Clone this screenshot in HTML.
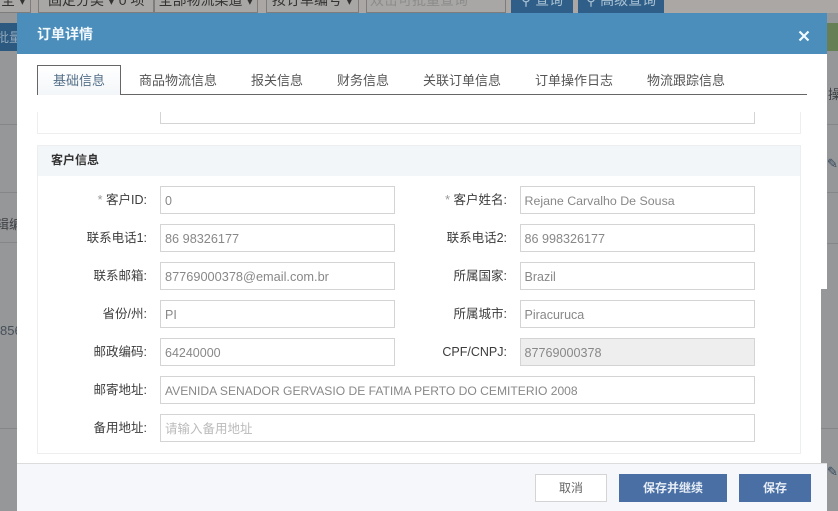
<!DOCTYPE html>
<html lang="zh"><head><meta charset="utf-8"><style>
html,body{margin:0;padding:0;background:#969798}
body{width:838px;height:511px;position:relative;overflow:hidden;font-family:"Liberation Sans","Noto Sans CJK SC",sans-serif;font-size:13px}
.a{position:absolute;box-sizing:border-box;white-space:nowrap}
.top{height:13px;top:0;border:1px solid #7e7d7c;border-top:0;background:#a9a7a5;color:#333;line-height:0;text-align:center;font-size:14px}
.btn{top:0;height:13px;background:#2f5f88;color:#a9c0d3;line-height:0;font-size:14px;text-align:center}
.ln{height:1px;background:#858687}
.bgt{color:#3d4145;font-size:13px}
.tab{top:72px;color:#555;font-size:13px;line-height:18px}
.lb{width:90px;text-align:right;color:#3c3c3c;font-size:12.5px;line-height:16px}
.in{height:28px;background:#fff;border:1px solid #d4d4d4;color:#888;font-size:12.5px;line-height:28px;padding-left:4px}
.r{padding-left:3.5px}
.blue{top:474px;height:28px;background:#4a6fa5;color:#e6edf5;text-align:center;line-height:29px;font-size:12px;font-weight:bold}
</style></head><body>
<div class="a" style="left:0;top:0;width:838px;height:511px;background:#969798"></div>
<div class="a" style="left:0;top:0;width:838px;height:13px;background:#aaa7a4"></div>
<div class="a top" style="left:-4px;width:35px">全 ▾</div>
<div class="a top" style="left:38px;width:116px;text-align:left;padding-left:9px">固定分类 ▾ 0 项</div>
<div class="a top" style="left:154px;width:104px">全部物流渠道 ▾</div>
<div class="a top" style="left:266px;width:93px">按订单编号 ▾</div>
<div class="a top" style="left:366px;width:140px;color:#8c8c8c;text-align:left;padding-left:3px">双击可批量查询</div>
<div class="a btn" style="left:511px;width:62px">⚲ 查询</div>
<div class="a btn" style="left:578px;width:86px">⚲ 高级查询</div>
<div class="a" style="left:0;top:23px;width:17px;height:28px;background:#2c597f;color:#8fa7bb;font-size:13px;line-height:30px;overflow:hidden;text-indent:-4px">批量</div>
<div class="a" style="left:827px;top:23px;width:11px;height:28px;background:#667f55"></div>
<div class="a ln" style="left:0;top:124px;width:17px"></div><div class="a ln" style="left:0;top:192px;width:17px"></div><div class="a ln" style="left:0;top:242px;width:17px"></div><div class="a ln" style="left:0;top:428px;width:17px"></div>
<div class="a ln" style="left:827px;top:124px;width:11px"></div><div class="a ln" style="left:827px;top:192px;width:11px"></div><div class="a ln" style="left:827px;top:243px;width:11px"></div><div class="a ln" style="left:821px;top:428px;width:17px"></div>
<div class="a bgt" style="left:0;top:214px;width:17px;overflow:hidden;text-indent:-4px">辑编</div>
<div class="a bgt" style="left:0;top:323px;width:17px;overflow:hidden;color:#46505a">856</div>
<div class="a bgt" style="left:828px;top:84px;width:10px;overflow:hidden">操作</div>
<div class="a bgt" style="left:827px;top:153px;width:11px;overflow:hidden;color:#34495e">✎ 拆</div>
<div class="a bgt" style="left:827px;top:461px;width:11px;overflow:hidden;color:#34495e">✎ 拆</div>

<div class="a" style="left:17px;top:13px;width:810px;height:276px;background:#fff"></div>
<div class="a" style="left:17px;top:289px;width:804px;height:174px;background:#fff"></div>
<div class="a" style="left:17px;top:13px;width:810px;height:41px;background:#4b8dbb;color:#f2f8fc;font-size:14px;font-weight:bold;line-height:43px;padding-left:20px">订单详情</div>
<svg class="a" style="left:798px;top:30px" width="12" height="12" viewBox="0 0 12 12"><path d="M1.5 1.5L10.500 10.500M10.500 1.500L1.500 10.500" stroke="#f2fbff" stroke-width="2.200"/></svg>

<div class="a" style="left:37px;top:94px;width:770px;height:1px;background:#666"></div>
<div class="a" style="left:37px;top:65px;width:84px;height:30px;border:1px solid #666;border-bottom:0;background:linear-gradient(#fff,#f3f6f9);color:#557089;font-size:13px;line-height:29px;text-align:center">基础信息</div>
<div class="a tab" style="left:139px">商品物流信息</div>
<div class="a tab" style="left:251px">报关信息</div>
<div class="a tab" style="left:337px">财务信息</div>
<div class="a tab" style="left:423px">关联订单信息</div>
<div class="a tab" style="left:535px">订单操作日志</div>
<div class="a tab" style="left:647px">物流跟踪信息</div>

<div class="a" style="left:37px;top:112px;width:764px;height:22px;border:1px solid #eee;border-top:0"></div>
<div class="a" style="left:160px;top:112px;width:595px;height:12px;border:1px solid #d4d4d4;border-top:0"></div>

<div class="a" style="left:37px;top:145px;width:764px;height:309px;border:1px solid #eceef0"></div>
<div class="a" style="left:38px;top:146px;width:762px;height:30px;background:#f3f6f9;color:#333;font-size:12px;font-weight:bold;line-height:29px;padding-left:13px">客户信息</div>

<div class="a lb" style="left:57px;top:192px"><span style="color:#999">* </span>客户ID:</div>
<div class="a in" style="left:160px;top:186px;width:235px">0</div>
<div class="a lb" style="left:417px;top:192px"><span style="color:#999">* </span>客户姓名:</div>
<div class="a in r" style="left:520px;top:186px;width:235px;font-size:12.4px">Rejane Carvalho De Sousa</div>

<div class="a lb" style="left:57px;top:230px">联系电话1:</div>
<div class="a in" style="left:160px;top:224px;width:235px;font-size:12.7px">86 98326177</div>
<div class="a lb" style="left:417px;top:230px">联系电话2:</div>
<div class="a in r" style="left:520px;top:224px;width:235px;font-size:12.6px">86 998326177</div>

<div class="a lb" style="left:57px;top:268px">联系邮箱:</div>
<div class="a in" style="left:160px;top:262px;width:235px;font-size:12.75px">87769000378@email.com.br</div>
<div class="a lb" style="left:417px;top:268px">所属国家:</div>
<div class="a in r" style="left:520px;top:262px;width:235px">Brazil</div>

<div class="a lb" style="left:57px;top:306px">省份/州:</div>
<div class="a in" style="left:160px;top:300px;width:235px">PI</div>
<div class="a lb" style="left:417px;top:306px">所属城市:</div>
<div class="a in r" style="left:520px;top:300px;width:235px">Piracuruca</div>

<div class="a lb" style="left:57px;top:344px">邮政编码:</div>
<div class="a in" style="left:160px;top:338px;width:235px">64240000</div>
<div class="a lb" style="left:417px;top:344px">CPF/CNPJ:</div>
<div class="a in r" style="left:520px;top:338px;width:235px;background:#eee;font-size:12.6px">87769000378</div>

<div class="a lb" style="left:57px;top:382px">邮寄地址:</div>
<div class="a in" style="left:160px;top:376px;width:595px;font-size:12.1px">AVENIDA SENADOR GERVASIO DE FATIMA PERTO DO CEMITERIO 2008</div>
<div class="a lb" style="left:57px;top:420px">备用地址:</div>
<div class="a in" style="left:160px;top:414px;width:595px;color:#bbb">请输入备用地址</div>

<div class="a" style="left:17px;top:463px;width:810px;height:48px;background:#f5f7fa;border-top:1px solid #dcdcdc"></div>
<div class="a" style="left:535px;top:474px;width:72px;height:28px;background:#fff;border:1px solid #d4d4d4;color:#666;font-size:12px;line-height:27px;text-align:center">取消</div>
<div class="a blue" style="left:619px;width:108px">保存并继续</div>
<div class="a blue" style="left:739px;width:72px">保存</div>
</body></html>
